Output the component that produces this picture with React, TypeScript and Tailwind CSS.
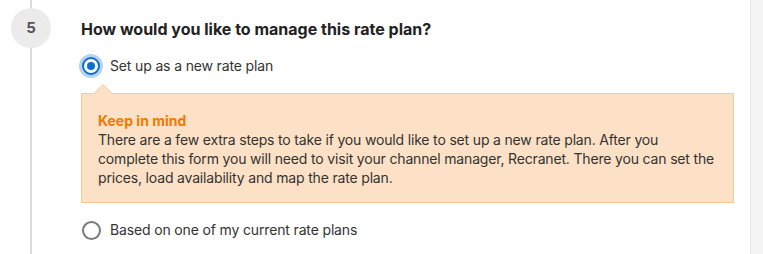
import { useState } from "react";

const options = [
  { id: "new", label: "Set up as a new rate plan" },
  { id: "based", label: "Based on one of my current rate plans" },
];

function Radio({ checked }: { checked: boolean }) {
  if (checked) {
    return (
      <span className="shrink-0 w-[24px] h-[24px] rounded-full bg-[#b5d3f3] flex items-center justify-center">
        <span className="w-[18px] h-[18px] rounded-full border-2 border-[#0b6fd2] bg-white flex items-center justify-center">
          <span className="w-[8px] h-[8px] rounded-full bg-[#0b6fd2]" />
        </span>
      </span>
    );
  }
  return (
    <span className="shrink-0 w-[24px] h-[24px] flex items-center justify-center">
      <span className="w-[19px] h-[19px] rounded-full border-2 border-[#7a7a7a] bg-white" />
    </span>
  );
}

export default function App() {
  const [choice, setChoice] = useState("new");

  return (
    <div
      className="flex w-[763px] h-[254px] bg-white overflow-hidden text-[#333]"
      style={{ fontFamily: "Inter, 'Noto Sans', sans-serif" }}
    >
      <div className="flex-1 flex">
        {/* Step indicator */}
        <div className="ml-[11px] w-[40px] flex flex-col items-center">
          <span className="w-[2px] h-[8px] bg-[#dcdcdc]" />
          <span className="w-[40px] h-[40px] rounded-full bg-[#ebebeb] flex items-center justify-center text-[15px] font-bold text-[#555]">
            5
          </span>
          <span className="w-[2px] flex-1 bg-[#dcdcdc]" />
        </div>

        {/* Question */}
        <div className="ml-[30px] pt-[17px] w-[653px]">
          <h3 className="text-[16px] leading-[24px] font-bold text-[#222]">
            How would you like to manage this rate plan?
          </h3>

          <button
            type="button"
            onClick={() => setChoice(options[0].id)}
            className="mt-[13px] ml-[-2px] flex items-center gap-[7px] text-[14px] leading-[24px] tracking-[-0.15px]"
          >
            <Radio checked={choice === options[0].id} />
            {options[0].label}
          </button>

          {/* Callout */}
          <div className="relative mt-[15px] bg-[#fde1c6] border border-[#fcc790] px-4 pt-[17px] pb-[15px] text-[14px] leading-[19px] tracking-[-0.17px]">
            <span className="absolute -top-[10px] left-[11px] w-0 h-0 border-x-[10px] border-x-transparent border-b-[10px] border-b-[#fcc790]" />
            <span className="absolute -top-[9px] left-[12px] w-0 h-0 border-x-[9px] border-x-transparent border-b-[9px] border-b-[#fde1c6]" />
            <p className="font-bold text-[#f27a00] tracking-normal">Keep in mind</p>
            <p className="text-[#333]">
              There are a few extra steps to take if you would like to set up a new rate plan. After you
              complete this form you will need to visit your channel manager, Recranet. There you can set the
              prices, load availability and map the rate plan.
            </p>
          </div>

          <button
            type="button"
            onClick={() => setChoice(options[1].id)}
            className="mt-[15px] ml-[-2px] flex items-center gap-[7px] text-[14px] leading-[24px] tracking-[-0.15px]"
          >
            <Radio checked={choice === options[1].id} />
            {options[1].label}
          </button>
        </div>
      </div>

      {/* Side panel */}
      <div className="w-[13px] bg-[#f4f4f4] border-l border-[#e6e6e6]" />
    </div>
  );
}
